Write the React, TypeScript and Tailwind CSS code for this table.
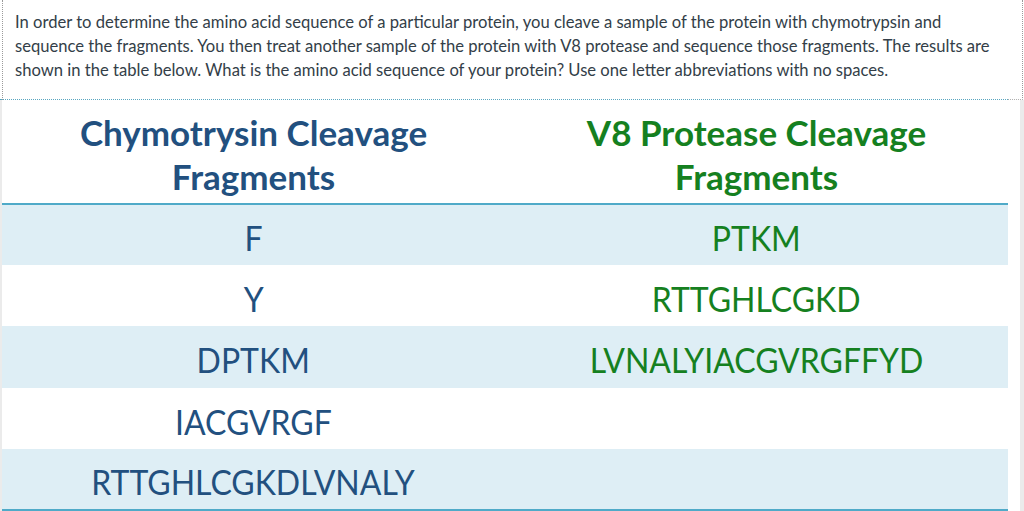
import React from "react";

const rows: [string, string, string][] = [
  ["F", "PTKM", "h-[60px]"],
  ["Y", "RTTGHLCGKD", "h-[61px]"],
  ["DPTKM", "LVNALYIACGVRGFFYD", "h-[62px]"],
  ["IACGVRGF", "", "h-[61px]"],
  ["RTTGHLCGKDLVNALY", "", "h-[60px]"],
];

export default function App() {
  return (
    <div className="w-[1024px] h-[511px] bg-white overflow-hidden flex flex-col">
      <div className="h-[100px] flex">
        <div className="w-[1021px] h-[100px] border-l border-r border-dotted border-[#9a9a9a] ml-[2px] relative">
          <div
            className="pl-[12px] pt-[10px] text-[16.6px] leading-[24px] text-[#333e48]"
            style={{ fontFamily: "Lato, 'Open Sans', sans-serif" }}
          >
            <div className="whitespace-nowrap">
              In order to determine the amino acid sequence of a particular protein, you cleave a sample of the protein with chymotrypsin and
            </div>
            <div className="whitespace-nowrap">
              sequence the fragments. You then treat another sample of the protein with V8 protease and sequence those fragments. The results are
            </div>
            <div className="whitespace-nowrap">
              shown in the table below. What is the amino acid sequence of your protein? Use one letter abbreviations with no spaces.
            </div>
          </div>
          <div className="absolute left-[-3px] bottom-0 w-[1008px] border-b border-dotted border-[#5aa6c0]" />
          <div className="absolute left-[1005px] bottom-0 w-[15px] border-b border-dotted border-[#b0b0b0]" />
        </div>
      </div>
      <div className="flex flex-1">
        <div className="w-[2px] bg-[#ebebeb]" />
        <div
          className="w-[1006px] flex flex-col"
          style={{ fontFamily: "Lato, 'Open Sans', sans-serif" }}
        >
          <div className="h-[105px] grid grid-cols-2 border-b-[2px] border-[#4faac8] pt-[10px]">
            <div className="text-center font-bold text-[35px] leading-[44px] text-[#22507f]">
              Chymotrysin Cleavage
              <br />
              Fragments
            </div>
            <div className="text-center font-bold text-[35px] leading-[44px] text-[#158020]">
              V8 Protease Cleavage
              <br />
              Fragments
            </div>
          </div>
          {rows.map(([a, b, h], i) => (
            <div
              key={i}
              className={`${h} grid grid-cols-2 items-center pt-[6px] text-[34px] ${
                i % 2 === 0 ? "bg-[#deeef5]" : "bg-white"
              }`}
            >
              <div className="text-center text-[#22507f] leading-none">
                <span className="inline-block scale-x-[0.94]">{a}</span>
              </div>
              <div className="text-center text-[#158020] leading-none">
                <span className="inline-block scale-x-[0.94]">{b}</span>
              </div>
            </div>
          ))}
          <div className="h-[2px] bg-[#4faac8]" />
        </div>
        <div className="w-[12px] bg-white" />
        <div className="w-[4px] bg-[#ebebeb]" />
      </div>
    </div>
  );
}
